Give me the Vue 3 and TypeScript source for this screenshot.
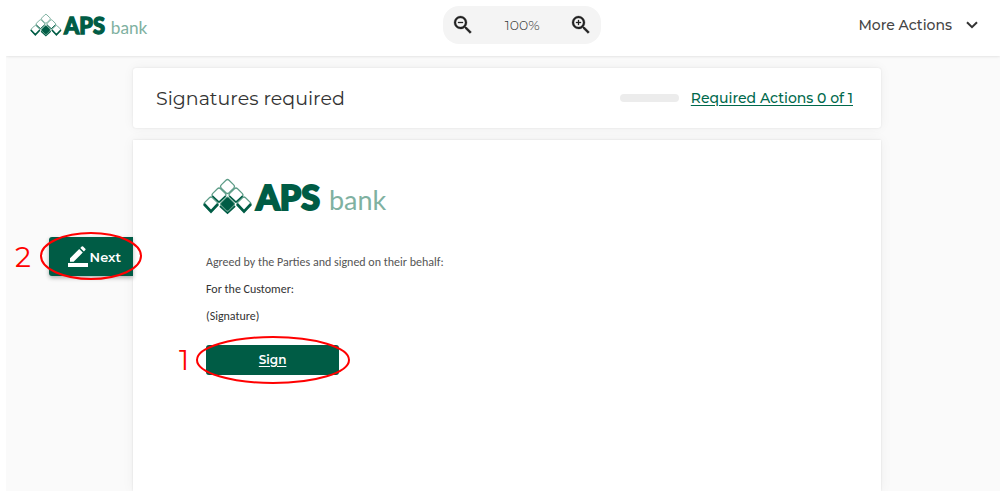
<script setup lang="ts">
import { ref } from 'vue'

const zoom = ref<number>(100)
const completed = ref<number>(0)
const total = 1

function changeZoom(step: number): void {
  zoom.value = Math.min(200, Math.max(50, zoom.value + step))
}
</script>

<template>
  <div class="app">
    <header class="topbar">
      <a class="brand" href="#" aria-label="APS bank">
        <svg width="118" height="23" viewBox="0 0 184 36">
          <g id="aps-logo">
            <g fill="#fff" stroke="#5d9c87" stroke-width="1.2">
              <rect x="-5.5" y="-5.5" width="11" height="11" rx="2.2" transform="translate(24.5 7.5) rotate(45)" />
              <rect x="-5.5" y="-5.5" width="11" height="11" rx="2.2" transform="translate(16 16) rotate(45)" />
              <rect x="-5.5" y="-5.5" width="11" height="11" rx="2.2" transform="translate(33 16) rotate(45)" />
              <rect x="-5.5" y="-5.5" width="11" height="11" rx="2.2" transform="translate(8 25) rotate(45)" />
              <rect x="-5.5" y="-5.5" width="11" height="11" rx="2.2" transform="translate(41 25) rotate(45)" />
            </g>
            <g fill="none" stroke="#005c45">
              <path d="M9.5 17 L16 23 L22.5 17 M26.5 17 L33 23 L39.5 17" stroke-width="1.5" />
              <path d="M1 25 L8 32.5 L15 25 M34 25 L41 32.5 L48 25" stroke-width="2.6" />
              <path d="M17 27 L24.5 34 L32 27" stroke-width="2" />
            </g>
            <rect x="-5.5" y="-5.5" width="11" height="11" rx="2" transform="translate(24.5 25) rotate(45)" fill="#005c45" stroke="#5d9c87" />
            <text class="logo-aps" x="53" y="31">APS</text>
            <text class="logo-bank" x="126" y="31">bank</text>
          </g>
        </svg>
      </a>
      <div class="zoom">
        <button type="button" aria-label="Zoom out" @click="changeZoom(-10)">
          <svg width="24" height="24" viewBox="0 0 24 24">
            <path d="M15.5 14h-.79l-.28-.27A6.47 6.47 0 0 0 16 9.5 6.5 6.5 0 1 0 9.5 16c1.61 0 3.09-.59 4.23-1.57l.27.28v.79l5 4.99L20.49 19l-4.99-5zm-6 0C7.01 14 5 11.99 5 9.5S7.01 5 9.5 5 14 7.01 14 9.5 11.99 14 9.5 14zM7 9h5v1H7z" />
          </svg>
        </button>
        <span class="level">{{ zoom }}%</span>
        <button type="button" aria-label="Zoom in" @click="changeZoom(10)">
          <svg width="24" height="24" viewBox="0 0 24 24">
            <path d="M15.5 14h-.79l-.28-.27A6.47 6.47 0 0 0 16 9.5 6.5 6.5 0 1 0 9.5 16c1.61 0 3.09-.59 4.23-1.57l.27.28v.79l5 4.99L20.49 19l-4.99-5zm-6 0C7.01 14 5 11.99 5 9.5S7.01 5 9.5 5 14 7.01 14 9.5 11.99 14 9.5 14zM7 9h2V7h1v2h2v1h-2v2H9v-2H7z" />
          </svg>
        </button>
      </div>
      <button class="more" type="button">
        More Actions
        <svg width="12" height="8" viewBox="0 0 12 8"><path d="M1 1.2 L6 6.2 L11 1.2" /></svg>
      </button>
    </header>

    <main class="workspace">
      <section class="card status">
        <h1>Signatures required</h1>
        <div class="progress">
          <span class="track"></span>
          <a href="#sign">Required Actions {{ completed }} of {{ total }}</a>
        </div>
      </section>

      <aside class="rail">
        <span class="step">2</span>
        <div class="marked">
          <button class="next" type="button">
            <svg width="20" height="21" viewBox="0 0 20 21">
              <path d="M2 12.2 L11.2 3 L14.8 6.6 L5.6 15.8 H2 Z M12.3 1.9 L13.7 .5 Q14.4 -.1 15.1 .5 L17.3 2.7 Q17.9 3.4 17.3 4.1 L15.9 5.5 Z M0 17 H20 V21 H0 Z" />
            </svg>
            Next
          </button>
          <svg class="ring ring-next" viewBox="0 0 102 48"><ellipse cx="51" cy="24" rx="50" ry="23" /></svg>
        </div>
      </aside>

      <article class="card document">
        <svg class="letterhead" width="184" height="36" viewBox="0 0 184 36" role="img" aria-label="APS bank"><use href="#aps-logo" /></svg>
        <p class="light">Agreed by the Parties and signed on their behalf:</p>
        <p>For the Customer:</p>
        <p>(Signature)</p>
        <div class="sign-row">
          <span class="step">1</span>
          <div class="marked">
            <button id="sign" class="sign" type="button">Sign</button>
            <svg class="ring ring-sign" viewBox="0 0 154 48"><ellipse cx="77" cy="24" rx="76" ry="23" /></svg>
          </div>
        </div>
      </article>
    </main>
  </div>
</template>

<style>
html, body, #app { height: 100%; }
body { margin: 0; background: #fff; }
#aps-logo text { font-family: Lato, sans-serif; }
#aps-logo .logo-aps { font-size: 34px; font-weight: 900; fill: #005c45; stroke: #005c45; stroke-width: 2px; }
#aps-logo .logo-bank { font-size: 27px; font-weight: 400; fill: #7fb1a1; }
</style>

<style scoped>
.app {
  min-height: 100%;
  display: flex;
  flex-direction: column;
  padding-left: 6px;
  box-sizing: border-box;
  font-family: Montserrat, Inter, sans-serif;
  color: #333;
}
button { font: inherit; border: 0; cursor: pointer; }
.topbar {
  display: flex;
  align-items: center;
  justify-content: space-between;
  height: 56px;
  padding: 0 22px 6px 24px;
  box-sizing: border-box;
  background: #fff;
  box-shadow: 0 0 3px rgba(0, 0, 0, 0.16);
  clip-path: inset(0 0 -4px 0);
  z-index: 1;
}
.brand { display: flex; margin-right: 38px; }
.brand svg { overflow: visible; }
.zoom {
  display: flex;
  align-items: center;
  justify-content: space-between;
  width: 158px;
  height: 38px;
  padding: 0 8px;
  box-sizing: border-box;
  border-radius: 16px;
  background: #f4f4f4;
}
.zoom button { display: flex; padding: 0; background: none; }
.zoom path { fill: #222; stroke: #222; stroke-width: 0.3; }
.level { font-size: 14px; font-weight: 300; }
.more {
  display: flex;
  align-items: center;
  gap: 14px;
  padding: 0;
  background: none;
  color: #444;
  font-size: 14px;
  font-weight: 500;
}
.more path { fill: none; stroke: #333; stroke-width: 2; }
.workspace {
  flex: 1;
  display: grid;
  grid-template-columns: 127px minmax(0, 1fr) 119px;
  grid-template-rows: auto 1fr;
  row-gap: 12px;
  padding-top: 12px;
  background: #fafafa;
  overflow: hidden;
}
.card { grid-column: 2; background: #fff; box-shadow: 0 0 2px rgba(0, 0, 0, 0.1), 0 0 12px rgba(0, 0, 0, 0.05); }
.status {
  display: flex;
  align-items: center;
  justify-content: space-between;
  height: 60px;
  padding: 0 28px 0 23px;
  border-radius: 3px;
}
h1 { margin: 0; font-size: 19px; font-weight: 400; }
.progress { display: flex; align-items: center; gap: 12px; }
.track { width: 59px; height: 8px; border-radius: 4px; background: #ececec; }
.progress a { color: #00694c; font-size: 14px; font-weight: 500; text-underline-offset: 2px; }
.rail {
  grid-column: 1;
  grid-row: 2;
  display: flex;
  align-items: center;
  align-self: start;
  justify-content: flex-end;
  gap: 18px;
  padding-top: 97px;
  position: relative;
  z-index: 1;
}
.step { color: #f00; font-size: 28px; line-height: 32px; font-weight: 400; }
.marked { position: relative; }
.next {
  display: flex;
  align-items: center;
  justify-content: flex-end;
  gap: 2px;
  width: 84px;
  height: 39px;
  padding: 0 12px 0 0;
  border-radius: 3px 0 0 3px;
  background: #005c45;
  color: #fff;
  font-size: 13px;
  font-weight: 600;
  box-shadow: 0 2px 4px rgba(0, 0, 0, 0.3);
}
.next path { fill: #fff; }
.ring { position: absolute; overflow: visible; pointer-events: none; }
.ring ellipse { fill: none; stroke: #f00; stroke-width: 2; }
.ring-next { left: -9px; top: -5px; width: 102px; height: 48px; }
.ring-sign { left: -10px; top: -9px; width: 154px; height: 48px; }
.document {
  grid-row: 2;
  padding: 39px 70px 0;
  font-family: Calibri, Carlito, "Open Sans", sans-serif;
  font-size: 12px;
}
.letterhead { display: block; margin-bottom: 38px; overflow: visible; }
p { margin: 0 0 9px 3px; line-height: 18px; }
p.light { color: #555; }
.sign-row {
  display: flex;
  align-items: center;
  gap: 17px;
  margin: 19px 0 0 -24px;
  font-family: Montserrat, Inter, sans-serif;
}
.sign {
  display: block;
  width: 133px;
  height: 30px;
  padding: 0 0 2px;
  border-radius: 3px;
  background: #005c45;
  color: #fff;
  font-size: 12px;
  font-weight: 600;
  text-decoration: underline;
  text-underline-offset: 2px;
}
</style>
